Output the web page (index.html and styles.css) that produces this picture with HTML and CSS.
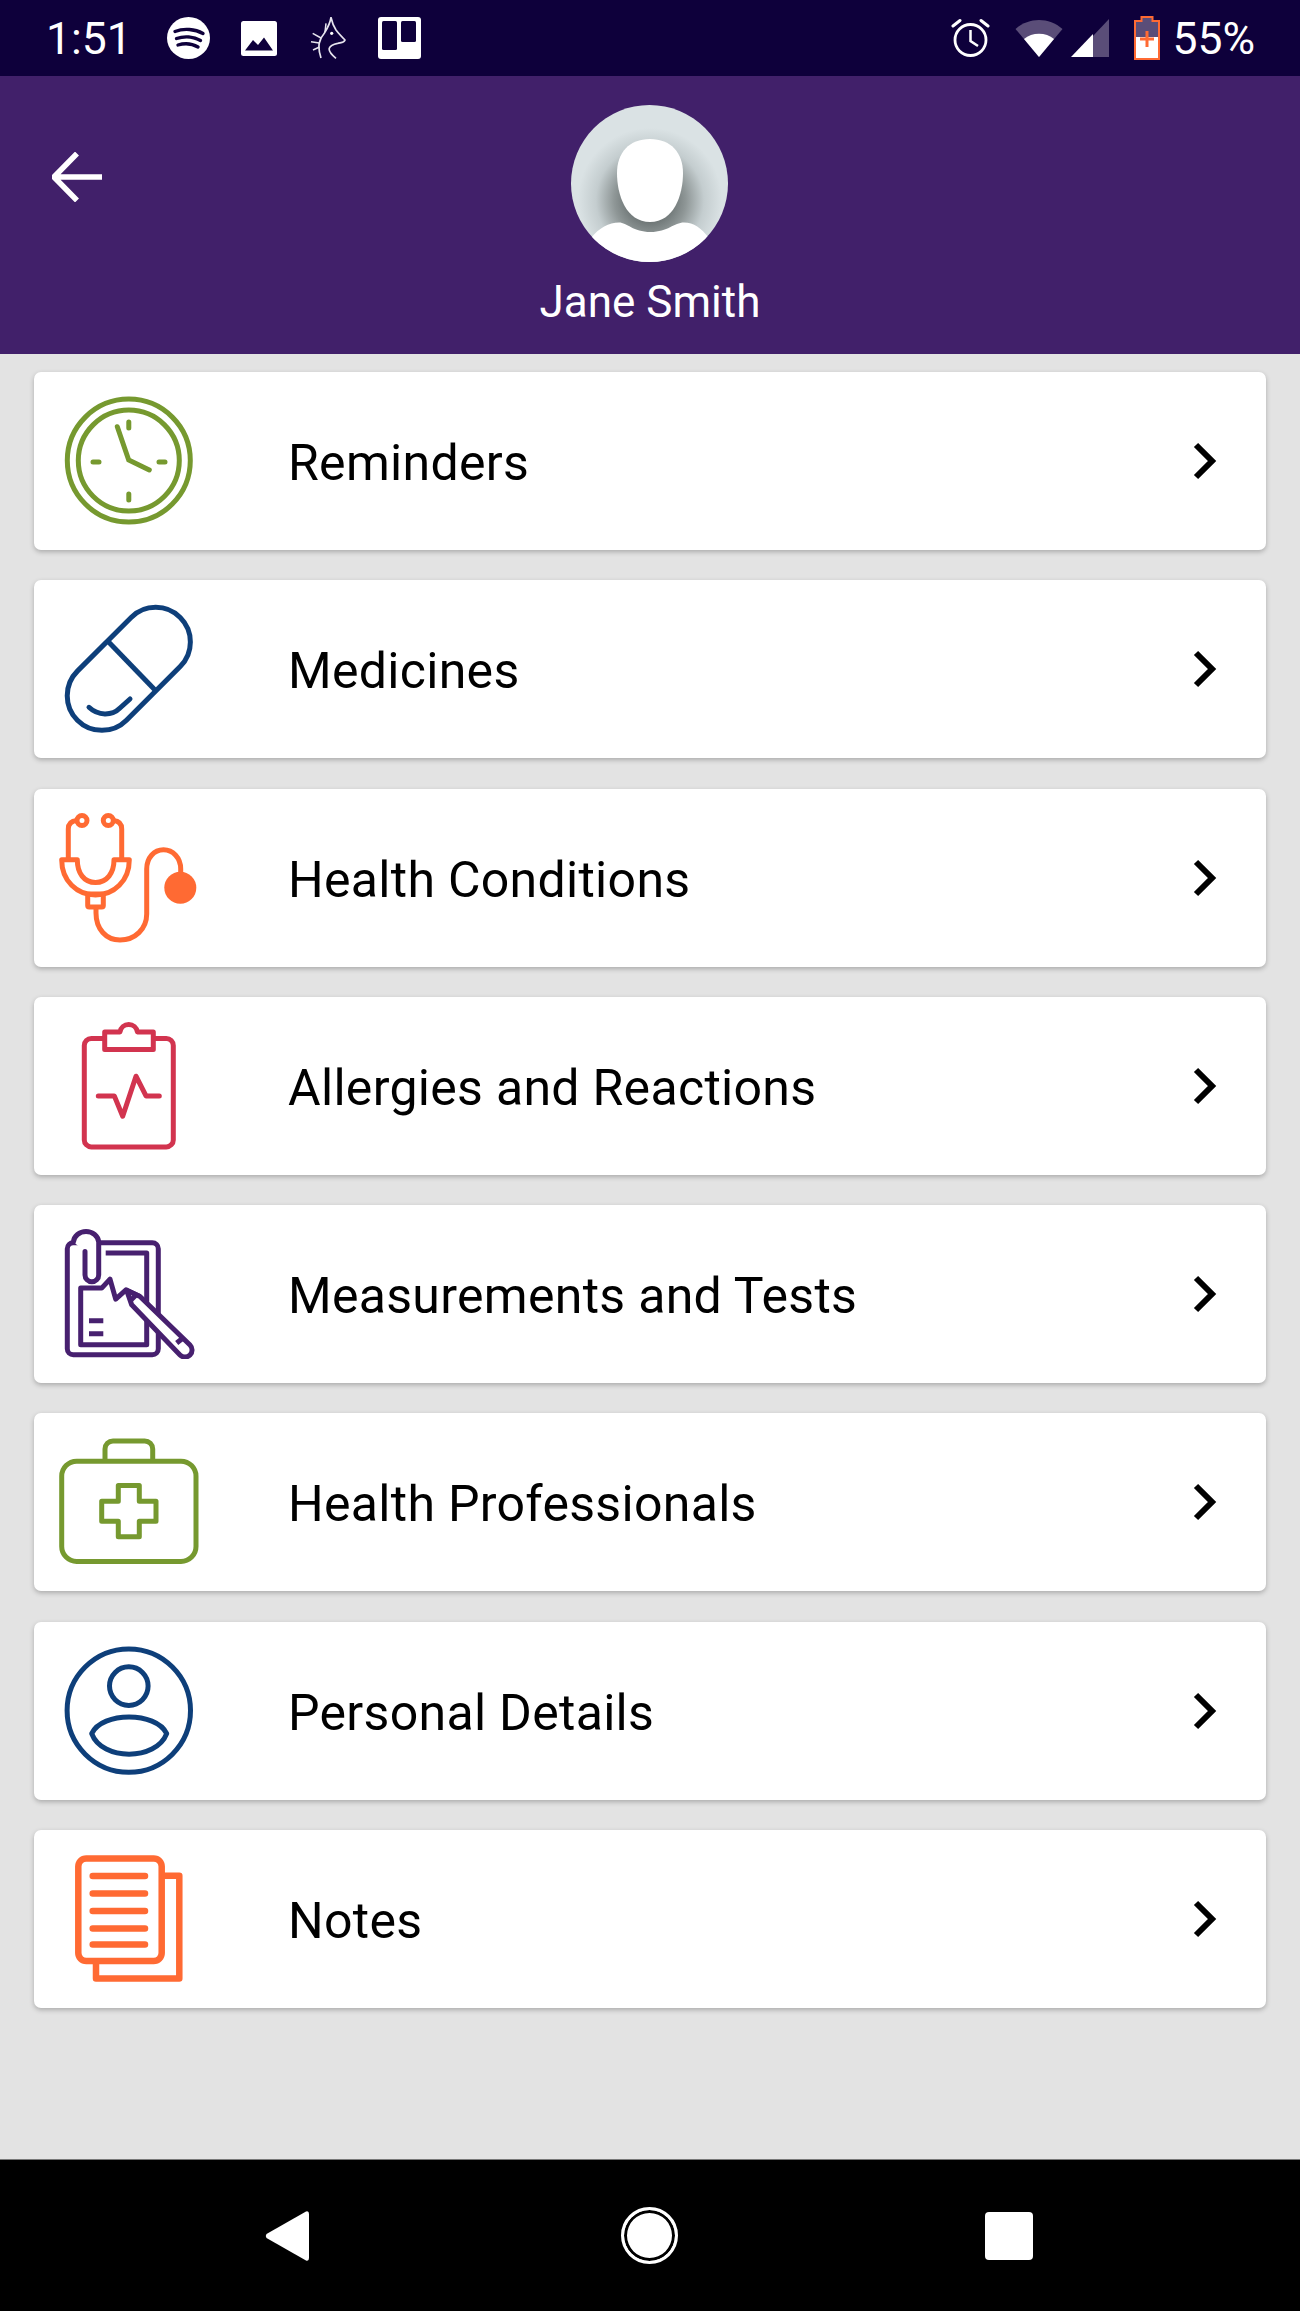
FILE: index.html
```html
<!DOCTYPE html>
<html lang="en">
<head>
    <meta charset="UTF-8">
    <meta name="viewport" content="width=device-width, initial-scale=1.0">
    <title>Jane Smith</title>
    <link rel="stylesheet" href="styles.css">
</head>
<body>
    <div class="status-bar">
        <div class="status-left">
            <span class="status-time">1:51</span>
            <svg class="st-spotify" width="43" height="42" viewBox="0 0 43 42"><ellipse cx="21.5" cy="21" rx="21.5" ry="21" fill="#fff"/><path d="M8 14.5C17 11 28 12 36 16.5M9.500 21.500C17 19 26.500 19.500 33.500 23.500M11 28C17.500 26 25 26.500 31 30" fill="none" stroke="#0e003b" stroke-width="3.4" stroke-linecap="round"/></svg>
            <svg class="st-image" width="36" height="35" viewBox="0 0 36 35"><rect width="36" height="35" rx="2.500" fill="#fff"/><path d="M4 29.500L12 19L17 24L23 16.500L32 29.500Z" fill="#0e003b"/></svg>
            <svg class="st-dragon" width="36" height="42" viewBox="0 0 36 42"><path d="M11 41C9 35 8.500 30 9.300 26C10 22 12 19 14.300 16.300C17 12 20 7 21 0.500C22 5 24 10 26 13C29 17 32 20 35 23C34 26 31 25.500 27.700 26.300C24 27 20 29 19.300 31.300C18.500 34 22 38 26 41.300" fill="none" stroke="#e6e4ee" stroke-width="1.700" stroke-linejoin="round"/><path d="M2.700 16.300L11 21M1 24.700L9.300 26M16 6.300L15 15M3 33L9.500 30" fill="none" stroke="#e6e4ee" stroke-width="1.500"/><circle cx="21.700" cy="16.300" r="1.600" fill="#fff"/></svg>
            <svg class="st-trello" width="43" height="42" viewBox="0 0 43 42"><rect width="43" height="42" rx="3" fill="#fff"/><rect x="4" y="4" width="15" height="29" rx="1.500" fill="#0e003b"/><rect x="23" y="4" width="15" height="21" rx="1.500" fill="#0e003b"/></svg>
        </div>
        <div class="status-right">
            <svg class="st-alarm" width="39" height="40" viewBox="0 0 39 40"><circle cx="19.500" cy="22" r="15.500" fill="none" stroke="#fff" stroke-width="2.800"/><path d="M19.500 12V23L27 28" fill="none" stroke="#fff" stroke-width="2.500"/><path d="M2 8L9 2.500M37 8L30 2.500" stroke="#fff" stroke-width="3" stroke-linecap="round"/></svg>
            <svg class="st-wifi" width="48" height="37" viewBox="0 0 48 37"><path d="M24 37L0.500 9C14 -3 34 -3 47.500 9Z" fill="#5a4d78"/><path d="M24 37L9 19C17 12 31 12 39 19Z" fill="#fff"/></svg>
            <svg class="st-signal" width="38" height="38" viewBox="0 0 38 38"><path d="M38 0V38H22V17Z" fill="#5a4d78"/><path d="M22 15V38H0Z" fill="#fff"/></svg>
            <svg class="st-battery" width="26" height="44" viewBox="0 0 26 44"><path d="M7.500 1H18.500V5H25V43H1V5H7.500Z" fill="#5a4d78" stroke="#ff6a33" stroke-width="2"/><rect x="2" y="21" width="22" height="21" fill="#fff"/><path d="M13 15V31M6 23H20" stroke="#ff6a33" stroke-width="3"/></svg>
            <span class="status-pct">55%</span>
        </div>
    </div>

    <header class="profile-header">
        <svg class="back-arrow" width="50" height="50" viewBox="0 0 50 50"><path d="M50 25H3M25 1.500L2 25L25 48.500" fill="none" stroke="#fff" stroke-width="5.500"/></svg>
        <div class="profile">
            <svg class="avatar" width="157" height="157" viewBox="0 0 157 157">
                <defs>
                    <radialGradient id="avatarBg" cx="79" cy="95" r="72" gradientUnits="userSpaceOnUse">
                        <stop offset="0.3" stop-color="#6e7676"/>
                        <stop offset="0.5" stop-color="#8f9797"/>
                        <stop offset="0.75" stop-color="#c4cdcf"/>
                        <stop offset="1" stop-color="#dae2e4"/>
                    </radialGradient>
                    <clipPath id="avatarClip"><circle cx="78.500" cy="78.500" r="78.500"/></clipPath>
                </defs>
                <g clip-path="url(#avatarClip)">
                    <rect width="157" height="157" fill="url(#avatarBg)"/>
                    <path d="M20 133C28 123 38 117.500 48 117.500C56 117.500 62 127 79.500 127C97 127 103 117.500 113 117.500C123 117.500 130 123 138 133V157H20Z" fill="#fff"/>
                    <path d="M79 34C100 34 112 48 112 68C112 90 103 117 79 117C55 117 46 90 46 68C46 48 58 34 79 34Z" fill="#fff"/>
                </g>
            </svg>
            <div class="profile-name">Jane Smith</div>
        </div>
    </header>

    <main class="menu">
        <a class="menu-card">
            <svg class="menu-icon ic-green" width="150" height="130" viewBox="0 0 150 130">
                <circle cx="78.800" cy="64.600" r="61.500"/>
                <circle cx="78.800" cy="64.600" r="50.500"/>
                <path d="M78.800 26V32M78.800 98V104M43 66H49M109 66H115M67.300 30.700L78.700 64L99.300 74" stroke-linecap="round"/>
            </svg>
            <span class="menu-label">Reminders</span>
            <svg class="chevron" width="24" height="38" viewBox="0 0 24 38"><path d="M3 3L19 19L3 35" fill="none" stroke="#000" stroke-width="6"/></svg>
        </a>
        <a class="menu-card">
            <svg class="menu-icon ic-blue" width="150" height="130" viewBox="0 0 150 130">
                <rect x="6.100" y="30.100" width="145.400" height="69.400" rx="34.700" transform="rotate(-45 78.800 64.800)"/>
                <path d="M56.700 36L105 86"/>
                <path d="M39 103.300C48 112 62 112 70 104L80 95" stroke-linecap="round"/>
            </svg>
            <span class="menu-label">Medicines</span>
            <svg class="chevron" width="24" height="38" viewBox="0 0 24 38"><path d="M3 3L19 19L3 35" fill="none" stroke="#000" stroke-width="6"/></svg>
        </a>
        <a class="menu-card">
            <svg class="menu-icon ic-orange" width="150" height="130" viewBox="0 0 150 130">
                <circle cx="32" cy="7.500" r="5"/>
                <circle cx="58.300" cy="7.500" r="5"/>
                <path d="M27 7.500C21 8 18.300 11 18.300 16V47M63.300 7.500C69 8 71.700 11 71.700 16V47"/>
                <path d="M11.700 46.800H27.300C27.300 60 34 69.500 45.500 69.500C57 69.500 64 60 64 46.800H79.300C79.300 68 64 82 45.500 82C27 82 11.700 68 11.700 46.800Z" stroke-linejoin="round"/>
                <rect x="37.700" y="81" width="15.600" height="13" rx="1.500"/>
                <path d="M46 94V100C46 116 56 127 70 127C85 127 96.700 116 96.700 101V56C96.700 45 104 36.800 113.500 36.800C123 36.800 130.700 45 130.700 56V62"/>
                <circle class="ic-solid" cx="130.300" cy="74.800" r="16"/>
            </svg>
            <span class="menu-label">Health Conditions</span>
            <svg class="chevron" width="24" height="38" viewBox="0 0 24 38"><path d="M3 3L19 19L3 35" fill="none" stroke="#000" stroke-width="6"/></svg>
        </a>
        <a class="menu-card">
            <svg class="menu-icon ic-red" width="150" height="130" viewBox="0 0 150 130">
                <rect x="34.300" y="17.500" width="89" height="108.400" rx="7"/>
                <path class="ic-white" d="M54.700 10.900H70A8.800 8.800 0 0 1 87.400 10.900H103.300V28.500H54.700Z" stroke-linejoin="round"/>
                <path d="M48.300 74.900H64.300L72.700 95.200L86 55.200L96 74.900H109.300" stroke-linecap="round" stroke-linejoin="round"/>
            </svg>
            <span class="menu-label">Allergies and Reactions</span>
            <svg class="chevron" width="24" height="38" viewBox="0 0 24 38"><path d="M3 3L19 19L3 35" fill="none" stroke="#000" stroke-width="6"/></svg>
        </a>
        <a class="menu-card">
            <svg class="menu-icon ic-purple" width="150" height="130" viewBox="0 0 150 130">
                <rect x="17.300" y="13.800" width="91" height="112" rx="6"/>
                <path d="M55.700 24.100H96.700V115.800H30.700V59.100H51.700L60 50.100L65.700 70.100L76 60.800L90 67.500" stroke-linejoin="round"/>
                <path class="ic-white" d="M23.400 13A12.700 11.500 0 0 1 48.700 13V46A6.850 6.850 0 0 1 35 46V22.500" stroke-linecap="round"/>
                <path class="ic-white" d="M76.700 61.500L90 67.500L140 116A7 7 0 0 1 130 126L81.700 75.800Z" stroke-linejoin="round"/>
                <path d="M80 72L87 65M126.700 114L133 109M39 91.800H53.300M39 104.800H53.300"/>
            </svg>
            <span class="menu-label">Measurements and Tests</span>
            <svg class="chevron" width="24" height="38" viewBox="0 0 24 38"><path d="M3 3L19 19L3 35" fill="none" stroke="#000" stroke-width="6"/></svg>
        </a>
        <a class="menu-card">
            <svg class="menu-icon ic-green" width="150" height="130" viewBox="0 0 150 130">
                <rect x="11.700" y="24.200" width="134.300" height="100.300" rx="15"/>
                <path d="M55 24V12A8 8 0 0 1 63 4H94.700A8 8 0 0 1 102.700 12V24"/>
                <path d="M68.300 48.500H89.300V64.200H106V84.200H89.300V99.800H68.300V84.200H51.700V64.200H68.300Z" stroke-linejoin="round"/>
            </svg>
            <span class="menu-label">Health Professionals</span>
            <svg class="chevron" width="24" height="38" viewBox="0 0 24 38"><path d="M3 3L19 19L3 35" fill="none" stroke="#000" stroke-width="6"/></svg>
        </a>
        <a class="menu-card">
            <svg class="menu-icon ic-blue" width="150" height="130" viewBox="0 0 150 130">
                <circle cx="78.800" cy="64.600" r="61.700"/>
                <circle cx="78.800" cy="40.100" r="19.300"/>
                <path d="M41.700 87.600C52 65.500 106 65.500 116.700 87.600C106 115 52 115 41.700 87.600Z" stroke-linejoin="round"/>
            </svg>
            <span class="menu-label">Personal Details</span>
            <svg class="chevron" width="24" height="38" viewBox="0 0 24 38"><path d="M3 3L19 19L3 35" fill="none" stroke="#000" stroke-width="6"/></svg>
        </a>
        <a class="menu-card">
            <svg class="menu-icon ic-orange ic-thick" width="150" height="130" viewBox="0 0 150 130">
                <rect x="28.300" y="4.400" width="83.400" height="102.700" rx="8"/>
                <path d="M111.700 21.800H129.300V124.400H46V107.100" stroke-linejoin="round"/>
                <path d="M42.700 22.100H95M42.700 39.400H95M42.700 57.100H95M42.700 74.400H95M42.700 90.400H95" stroke-linecap="round"/>
            </svg>
            <span class="menu-label">Notes</span>
            <svg class="chevron" width="24" height="38" viewBox="0 0 24 38"><path d="M3 3L19 19L3 35" fill="none" stroke="#000" stroke-width="6"/></svg>
        </a>
    </main>

    <nav class="nav-bar">
        <svg class="nav-back" width="44" height="52" viewBox="0 0 44 52"><path d="M41 1.500Q44 0.500 44 4V48Q44 51.500 41 50.500L1.500 28Q0 26 1.500 24Z" fill="#fff"/></svg>
        <div class="nav-home"></div>
        <div class="nav-square"></div>
    </nav>
</body>
</html>
```

FILE: styles.css
```css
body {
    margin: 0;
    width: 1300px;
    height: 2311px;
    display: flex;
    flex-direction: column;
    overflow: hidden;
    background-color: #e3e3e3;
    font-family: Roboto, "Noto Sans", sans-serif;
}

/* status bar */
.status-bar {
    height: 76px;
    flex: none;
    display: flex;
    justify-content: space-between;
    align-items: center;
    background-color: #0e003b;
    color: #fff;
    font-size: 44.5px;
    line-height: 1;
}
.status-left, .status-right {
    display: flex;
    align-items: center;
}
.status-left {
    padding-left: 46px;
}
.status-right {
    padding-right: 45px;
}
.status-time {
    width: 121px;
    padding-top: 3px;
}
.st-image {
    margin-left: 31px;
}
.st-dragon {
    margin-left: 33px;
}
.st-trello {
    margin-left: 32px;
}
.st-wifi {
    margin-left: 25px;
}
.st-signal {
    margin-left: 8px;
}
.st-battery {
    margin-left: 25px;
}
.status-pct {
    margin-left: 12px;
    padding-top: 3px;
}

/* header */
.profile-header {
    height: 278px;
    flex: none;
    display: grid;
    grid-template-columns: 1fr auto 1fr;
    background-color: #41206a;
    color: #fff;
}
.back-arrow {
    margin: 76px 0 0 52px;
}
.profile {
    grid-column: 2;
    padding-top: 29px;
    display: flex;
    flex-direction: column;
    align-items: center;
}
.avatar {
    display: block;
}
.profile-name {
    margin-top: 14px;
    font-size: 44px;
    line-height: 52px;
}

/* menu */
.menu {
    flex: 1;
    padding: 18px 34px 0;
    display: flex;
    flex-direction: column;
    gap: 30.3px;
}
.menu-card {
    height: 178px;
    flex: none;
    display: flex;
    align-items: center;
    padding-left: 16px;
    background-color: #fff;
    border-radius: 7px;
    box-shadow: 0 2px 5px rgba(0, 0, 0, 0.25);
}
.menu-icon {
    flex: none;
    fill: none;
    stroke-width: 5;
}
.menu-label {
    flex: 1;
    margin-left: 88px;
    padding-top: 4px;
    font-size: 50px;
    letter-spacing: 0.3px;
    color: #000;
}
.chevron {
    flex: none;
    margin-right: 49px;
}

/* icon colours */
.ic-green {
    stroke: #76992f;
}
.ic-blue {
    stroke: #0e3f7a;
}
.ic-orange {
    stroke: #ff6a33;
}
.ic-red {
    stroke: #d2344f;
}
.ic-purple {
    stroke: #47206f;
}
.ic-thick {
    stroke-width: 6.5;
}
.ic-white {
    fill: #fff;
}
.ic-solid {
    fill: #ff6a33;
    stroke: none;
}

/* bottom nav */
.nav-bar {
    height: 151px;
    flex: none;
    display: flex;
    align-items: center;
    padding-left: 265px;
    background-color: #000;
    border-top: 1px solid #777;
}
.nav-home {
    width: 57px;
    height: 57px;
    margin-left: 312px;
    box-sizing: border-box;
    border-radius: 50%;
    border: 3px solid #fff;
    background-color: #fff;
    box-shadow: inset 0 0 0 3px #000;
}
.nav-square {
    width: 48px;
    height: 48px;
    margin-left: 307px;
    border-radius: 4px;
    background-color: #fff;
}
```
